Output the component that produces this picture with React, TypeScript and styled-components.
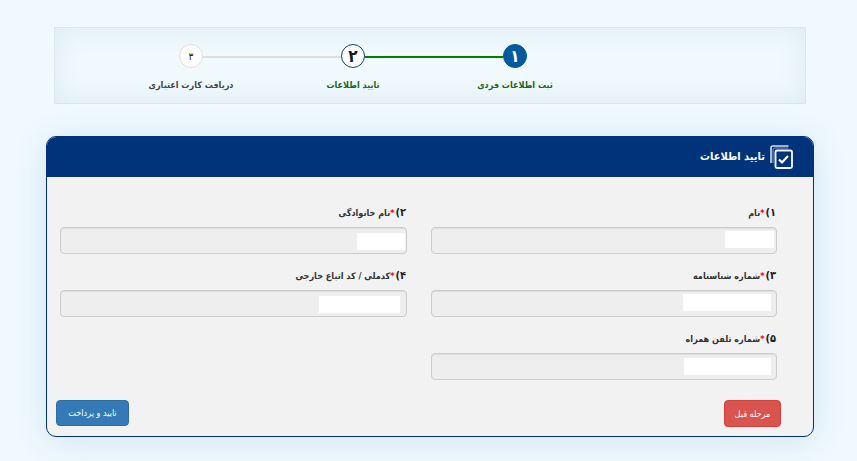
import React from "react";
import styled, { createGlobalStyle } from "styled-components";

const steps = [
  { num: "۱", title: "ثبت اطلاعات فردی", state: "done" },
  { num: "۲", title: "تایید اطلاعات", state: "current" },
  { num: "۳", title: "دریافت کارت اعتباری", state: "todo" },
] as const;

const fields = [
  { num: "۱", label: "نام", mask: { w: 49, right: 3, top: 4 } },
  { num: "۲", label: "نام خانوادگی", mask: { w: 48, right: 2, top: 6 } },
  { num: "۳", label: "شماره شناسنامه", mask: { w: 88, right: 6, top: 4 } },
  { num: "۴", label: "کدملی / کد اتباع خارجی", mask: { w: 81, right: 7, top: 6 } },
  { num: "۵", label: "شماره تلفن همراه", mask: { w: 87, right: 6, top: 5 } },
];

const App = () => {
  return (
    <>
      <GlobalStyle />
      <Page dir="rtl">
        <Stepper>
          {steps.map((step, i) => (
            <Step key={step.num}>
              <Track>
                <Line $color={i === 0 ? "transparent" : i === 1 ? "#008000" : "#dedede"} />
                <Circle $state={step.state}>{step.num}</Circle>
                <Line $color={i === 0 ? "#008000" : i === 1 ? "#dedede" : "transparent"} />
              </Track>
              <StepTitle $active={step.state !== "todo"}>{step.title}</StepTitle>
            </Step>
          ))}
        </Stepper>

        <Card>
          <CardHeader>
            <svg width="24" height="25" viewBox="0 0 24 25" fill="none">
              <path d="M18.5 1H3a2 2 0 0 0-2 2V18" stroke="#d3dbe8" strokeWidth="1.6" />
              <path d="M18.5 3H4.5a1.5 1.5 0 0 0-1.5 1.5V18" stroke="#7f95b8" strokeWidth="1" />
              <rect x="5.5" y="5.5" width="16.5" height="17.5" rx="1.5" fill="#00337a" stroke="#f2f4f8" strokeWidth="1.9" />
              <path d="M9 14.5l3 3 6-6.5" stroke="#fff" strokeWidth="2.2" />
            </svg>
            <CardTitle>تایید اطلاعات</CardTitle>
          </CardHeader>
          <Form>
            {fields.map((field) => (
              <Field key={field.num}>
                <Label>
                  <Num>{field.num})</Num>
                  <Star>*</Star>
                  {field.label}
                </Label>
                <Input>
                  <Mask $w={field.mask.w} $right={field.mask.right} $top={field.mask.top} />
                </Input>
              </Field>
            ))}
          </Form>
          <Actions>
            <Button $bg="#d9534f" $border="#d43f3a" $w={57} $h={27}>
              مرحله قبل
            </Button>
            <Button $bg="#337ab7" $border="#2e6da4" $w={73} $h={26}>
              تایید و پرداخت
            </Button>
          </Actions>
        </Card>
      </Page>
    </>
  );
};

export default App;

const GlobalStyle = createGlobalStyle`
  html, body {
    margin: 0;
    padding: 0;
    background: #eff9ff;
    overflow: hidden;
  }
  * {
    box-sizing: border-box;
  }
`;

const Page = styled.div`
  width: 857px;
  height: 461px;
  padding-top: 27px;
  font-family: "DejaVu Sans Condensed", "DejaVu Sans", "Noto Sans", sans-serif;
  color: #333;
`;

const Stepper = styled.div`
  display: flex;
  width: 752px;
  height: 77px;
  margin: 0 51px 0 54px;
  padding: 16px 209px 0 0;
  background: #eff9fe;
  border: 1px solid #dde6e8;
  box-shadow: inset 0 0 28px rgba(40, 90, 120, 0.09);
`;

const Step = styled.div`
  display: flex;
  flex-direction: column;
  align-items: center;
  width: 162px;
`;

const Track = styled.div`
  display: flex;
  align-items: center;
  width: 100%;
  height: 24px;
`;

const Line = styled.div<{ $color: string }>`
  flex: 1;
  height: 2px;
  margin-top: 2px;
  background: ${({ $color }) => $color};
`;

const Circle = styled.div<{ $state: string }>`
  display: flex;
  align-items: center;
  justify-content: center;
  width: 24px;
  height: 24px;
  border-radius: 50%;
  font-weight: ${({ $state }) => ($state === "todo" ? 400 : 700)};
  font-size: ${({ $state }) => ($state === "todo" ? "10px" : "17px")};
  background: ${({ $state }) => ($state === "done" ? "#045a9c" : "#fff")};
  color: ${({ $state }) => ($state === "done" ? "#fff" : "#1a1a1a")};
  border: ${({ $state }) => ($state === "current" ? "1.5px" : "1px")} solid
    ${({ $state }) =>
      $state === "done" ? "#045a9c" : $state === "current" ? "#123f6e" : "#dedede"};
`;

const StepTitle = styled.div<{ $active: boolean }>`
  margin-top: 10px;
  font-size: 9px;
  font-weight: 700;
  line-height: 14px;
  white-space: nowrap;
  color: ${({ $active }) => ($active ? "#1d6420" : "#444")};
`;

const Card = styled.div`
  width: 768px;
  height: 301px;
  margin: 32px 43px 0 46px;
  background: #f2f2f2;
  border: 1px solid #00337a;
  border-radius: 10px;
  overflow: hidden;
  box-shadow: 0 4px 34px rgba(20, 80, 130, 0.12);
`;

const CardHeader = styled.div`
  display: flex;
  align-items: center;
  gap: 5px;
  height: 40px;
  padding: 1px 19px 0 0;
  background: #00337a;
  color: #fff;
`;

const CardTitle = styled.h2`
  margin: 0 0 3px;
  font-size: 11px;
  font-weight: 700;
`;

const Form = styled.div`
  display: grid;
  grid-template-columns: 346px 347px;
  column-gap: 24px;
  row-gap: 15px;
  padding: 29px 36px 0 13px;
`;

const Field = styled.div`
  display: flex;
  flex-direction: column;
  gap: 7px;
`;

const Label = styled.label`
  height: 14px;
  padding-right: 1px;
  font-size: 9px;
  font-weight: 700;
  line-height: 14px;
  color: #333;
`;

const Num = styled.span`
  margin-left: 1px;
  font-size: 11px;
  color: #222;
`;

const Star = styled.span`
  color: #f00;
`;

const Input = styled.div`
  height: 27px;
  background: #eeeeee;
  border: 1px solid #cccccc;
  border-radius: 4px;
  box-shadow: inset 0 1px 1px rgba(0, 0, 0, 0.075);
`;

const Mask = styled.div<{ $w: number; $right: number; $top: number }>`
  width: ${({ $w }) => $w}px;
  height: 17px;
  margin-top: ${({ $top }) => $top - 1}px;
  margin-right: ${({ $right }) => $right - 1}px;
  background: #fff;
`;

const Actions = styled.div`
  display: flex;
  justify-content: space-between;
  align-items: flex-start;
  padding: 20px 32px 0 9px;
`;

const Button = styled.button<{ $bg: string; $border: string; $w: number; $h: number }>`
  width: ${({ $w }) => $w}px;
  height: ${({ $h }) => $h}px;
  padding: 0;
  font-family: inherit;
  font-size: 9px;
  color: #fff;
  background: ${({ $bg }) => $bg};
  border: 1px solid ${({ $border }) => $border};
  border-radius: 4px;
`;
